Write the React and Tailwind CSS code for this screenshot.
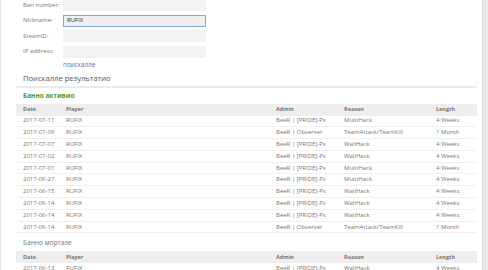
const active = [
  ['2017-07-11', 'RUFIX', 'BeeR | [PRIDE]-Px', 'MultiHack', '4 Weeks'],
  ['2017-07-09', 'RUFIX', 'BeeR | Observer', 'TeamAttack/TeamKill', '1 Month'],
  ['2017-07-07', 'RUFIX', 'BeeR | [PRIDE]-Px', 'WallHack', '4 Weeks'],
  ['2017-07-02', 'RUFIX', 'BeeR | [PRIDE]-Px', 'WallHack', '4 Weeks'],
  ['2017-07-01', 'RUFIX', 'BeeR | [PRIDE]-Px', 'MultiHack', '4 Weeks'],
  ['2017-06-27', 'RUFIX', 'BeeR | [PRIDE]-Px', 'MultiHack', '4 Weeks'],
  ['2017-06-15', 'RUFIX', 'BeeR | [PRIDE]-Px', 'WallHack', '4 Weeks'],
  ['2017-06-14', 'RUFIX', 'BeeR | [PRIDE]-Px', 'WallHack', '4 Weeks'],
  ['2017-06-14', 'RUFIX', 'BeeR | [PRIDE]-Px', 'WallHack', '4 Weeks'],
  ['2017-06-14', 'RUFIX', 'BeeR | Observer', 'TeamAttack/TeamKill', '1 Month'],
];
const expired = [
  ['2017-06-13', 'RUFIX', 'BeeR | [PRIDE]-Px', 'WallHack', '4 Weeks'],
];

const fields = [
  { label: 'Ban number:', value: '' },
  { label: 'Nickname:', value: 'RUFIX', focus: true },
  { label: 'SteamID:', value: '' },
  { label: 'IP address:', value: '' },
];

const cols = ['w-[43px]', 'w-[210px]', 'w-[68px]', 'w-[92px]', 'flex-1'];

function Head() {
  return (
    <div className="flex h-[12px] items-center bg-[#eeeeee] pl-[7px] text-[5.5px] font-bold text-[#777]">
      {['Date', 'Player', 'Admin', 'Reason', 'Length'].map((h, i) => (
        <div key={h} className={cols[i]}>{h}</div>
      ))}
    </div>
  );
}

function Rows({ rows }) {
  return rows.map((r, k) => (
    <div key={k} className="flex h-[11.8px] items-center border-b border-[#f0f0f0] pl-[7px] text-[6px] text-[#777]">
      {r.map((c, i) => (
        <div key={i} className={cols[i] + ' whitespace-nowrap'}>{c}</div>
      ))}
    </div>
  ));
}

export default function App() {
  return (
    <div className="flex h-[270px] w-[488px] overflow-hidden bg-white" style={{ fontFamily: '"Open Sans", "DejaVu Sans", sans-serif' }}>
      <div className="flex-1 min-w-0 border-l border-[#e4e4e4]">
        <div className="-mt-px flex flex-col gap-[3.5px]">
          {fields.map(f => (
            <div key={f.label} className="flex h-[12px] items-center">
              <div className="w-[62px] pl-[22px] text-[6px] text-[#777]">{f.label}</div>
              <div className={`flex h-[12px] w-[143px] items-center px-[3px] text-[6px] text-[#333] ${f.focus ? 'border border-[#7fa7d8] bg-[#efefef]' : 'bg-[#f3f3f3]'}`}>{f.value}</div>
            </div>
          ))}
        </div>
        <div className="h-[13px] pl-[62px] text-[6.3px] leading-[13px] text-[#5b6db0]">поискалле</div>
        <div className="mx-[15px] mr-[5px] border-b-2 border-[#ececec]">
          <div className="h-[15.5px] pl-[7px] text-[7.6px] leading-[15.5px] text-[#555]">Поискалле результатио</div>
        </div>
        <div className="mx-[15px] mr-[5px]">
          <div className="h-[15.5px] pl-[7px] text-[6.5px] font-bold leading-[15.5px] text-[#4f9a2c]">Банно активио</div>
          <Head />
          <Rows rows={active} />
          <div className="h-[17.7px] pl-[7px] text-[6.6px] leading-[19px] text-[#777]">Банно мортале</div>
          <Head />
          <Rows rows={expired} />
        </div>
      </div>
      <div className="w-[6px] shrink-0 border-l border-[#d9d9d9] bg-[#e8e8e8]" />
    </div>
  );
}
